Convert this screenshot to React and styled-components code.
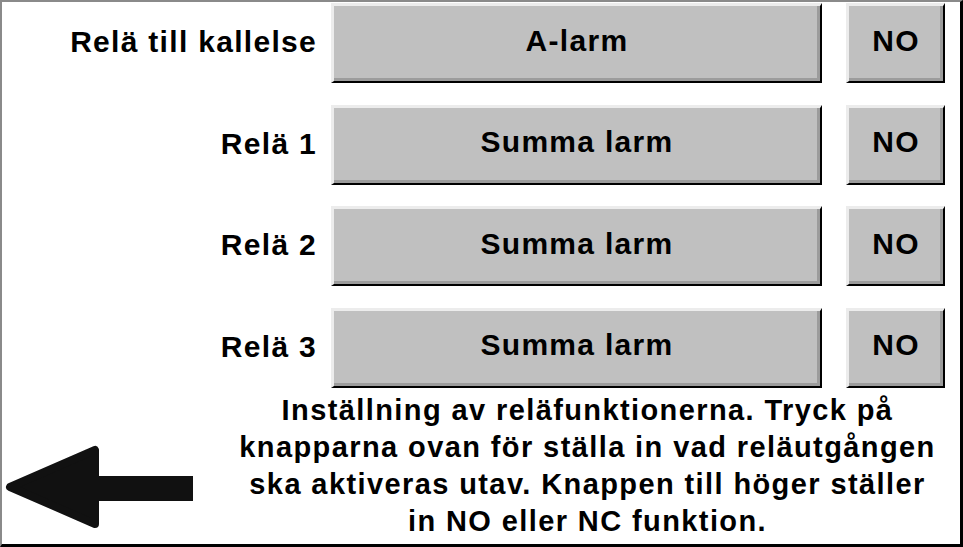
import React from 'react';
import styled, { createGlobalStyle } from 'styled-components';

const GlobalStyle = createGlobalStyle`
    html, body {
        margin: 0;
        padding: 0;
        background: #ffffff;
    }
    * {
        box-sizing: border-box;
    }
`;

const Frame = styled.div`
    width: 963px;
    height: 547px;
    background: #ffffff;
    border-top: 2px solid #8a8a8a;
    border-left: 2px solid #8a8a8a;
    border-right: 3px solid #000000;
    border-bottom: 3px solid #000000;
    padding-top: 1px;
    display: flex;
    flex-direction: column;
    font-family: "Liberation Sans", Arial, sans-serif;
    font-weight: bold;
    color: #000000;
`;

const Rows = styled.div`
    display: grid;
    grid-template-columns: 329px 491px 123px;
    row-gap: 21.5px;
`;

const Label = styled.div`
    height: 80px;
    display: flex;
    align-items: center;
    justify-content: flex-end;
    font-size: 30px;
    letter-spacing: 1.3px;
    padding: 0 14px 2px 0;
    white-space: nowrap;
`;

const Button = styled.button`
    height: 80px;
    background: #c0c0c0;
    border-top: 3px solid #ececec;
    border-left: 3px solid #ececec;
    border-right: 2px solid #000000;
    border-bottom: 2px solid #000000;
    box-shadow: inset -3px -3px 0 #9c9c9c;
    display: flex;
    align-items: center;
    justify-content: center;
    padding: 0 0 6px 0;
    font-family: inherit;
    font-weight: bold;
    font-size: 30px;
    letter-spacing: 1.3px;
    color: #000000;
`;

const ModeButton = styled(Button)`
    margin-left: 24px;
    width: 99px;
`;

const Bottom = styled.div`
    flex: 1;
    display: grid;
    grid-template-columns: 213px 1fr;
`;

const BackArrow = styled.svg`
    align-self: end;
    margin-bottom: 12px;
    display: block;
`;

const Help = styled.p`
    margin: 4px 0 0 0;
    text-align: center;
    font-size: 29px;
    letter-spacing: 1.4px;
    line-height: 37px;
`;

const rows = [
    { label: 'Relä till kallelse', source: 'A-larm', mode: 'NO' },
    { label: 'Relä 1', source: 'Summa larm', mode: 'NO' },
    { label: 'Relä 2', source: 'Summa larm', mode: 'NO' },
    { label: 'Relä 3', source: 'Summa larm', mode: 'NO' },
];

export default function App() {
    return (
        <>
            <GlobalStyle />
            <Frame>
                <Rows>
                    {rows.map((r) => (
                        <React.Fragment key={r.label}>
                            <Label>{r.label}</Label>
                            <Button>{r.source}</Button>
                            <ModeButton>{r.mode}</ModeButton>
                        </React.Fragment>
                    ))}
                </Rows>
                <Bottom>
                    <BackArrow width="195" height="90" viewBox="0 0 195 90">
                        <polygon
                            points="8,45 93,8 93,82"
                            fill="#111111"
                            stroke="#111111"
                            strokeWidth="8"
                            strokeLinejoin="round"
                        />
                        <rect x="88" y="34" width="103" height="25" fill="#111111" />
                    </BackArrow>
                    <Help>
                        Inställning av reläfunktionerna. Tryck på<br />
                        knapparna ovan för ställa in vad reläutgången<br />
                        ska aktiveras utav. Knappen till höger ställer<br />
                        in NO eller NC funktion.
                    </Help>
                </Bottom>
            </Frame>
        </>
    );
}
